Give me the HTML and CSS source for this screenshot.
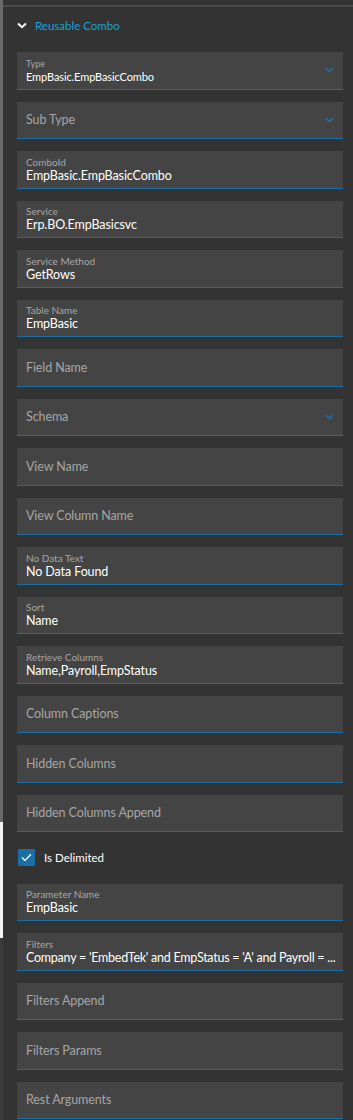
FILE: index.html
```html
<!DOCTYPE html>
<html lang="en">
<head>
    <meta charset="UTF-8">
    <title>Reusable Combo</title>
    <link rel="stylesheet" href="styles.css">
</head>
<body>
<div class="frame">
    <div class="edge">
        <div class="edge-top"></div>
        <div class="edge-white"></div>
        <div class="edge-bottom"></div>
    </div>
    <div class="panel">
        <div class="panel-line"></div>
        <div class="section-head">
            <svg class="head-chevron" width="10" height="7" viewBox="0 0 10 7">
                <path d="M1 1.5 L5 5.2 L9 1.5" fill="none" stroke="#ffffff" stroke-width="2"/>
            </svg>
            <span class="head-title">Reusable Combo</span>
        </div>

        <div class="fields">
            <div class="field field-select">
                <div class="field-text">
                    <div class="field-label">Type</div>
                    <div class="field-value">EmpBasic.EmpBasicCombo</div>
                </div>
                <svg class="select-chevron" width="9" height="6" viewBox="0 0 9 6">
                    <path d="M1 1 L4.5 4.5 L8 1" fill="none" stroke="#1a6fa6" stroke-width="1.6"/>
                </svg>
            </div>
            <div class="field">
                <div class="field-placeholder">Sub Type</div>
                <svg class="select-chevron" width="9" height="6" viewBox="0 0 9 6">
                    <path d="M1 1 L4.5 4.5 L8 1" fill="none" stroke="#1a6fa6" stroke-width="1.6"/>
                </svg>
            </div>
            <div class="field">
                <div class="field-text">
                    <div class="field-label">ComboId</div>
                    <div class="field-value">EmpBasic.EmpBasicCombo</div>
                </div>
            </div>
            <div class="field">
                <div class="field-text">
                    <div class="field-label">Service</div>
                    <div class="field-value">Erp.BO.EmpBasicsvc</div>
                </div>
            </div>
            <div class="field">
                <div class="field-text">
                    <div class="field-label">Service Method</div>
                    <div class="field-value">GetRows</div>
                </div>
            </div>
            <div class="field">
                <div class="field-text">
                    <div class="field-label">Table Name</div>
                    <div class="field-value">EmpBasic</div>
                </div>
            </div>
            <div class="field">
                <div class="field-placeholder">Field Name</div>
            </div>
            <div class="field">
                <div class="field-placeholder">Schema</div>
                <svg class="select-chevron" width="9" height="6" viewBox="0 0 9 6">
                    <path d="M1 1 L4.5 4.5 L8 1" fill="none" stroke="#1a6fa6" stroke-width="1.6"/>
                </svg>
            </div>
            <div class="field">
                <div class="field-placeholder">View Name</div>
            </div>
            <div class="field">
                <div class="field-placeholder">View Column Name</div>
            </div>
            <div class="field">
                <div class="field-text">
                    <div class="field-label">No Data Text</div>
                    <div class="field-value">No Data Found</div>
                </div>
            </div>
            <div class="field">
                <div class="field-text">
                    <div class="field-label">Sort</div>
                    <div class="field-value">Name</div>
                </div>
            </div>
            <div class="field">
                <div class="field-text">
                    <div class="field-label">Retrieve Columns</div>
                    <div class="field-value">Name,Payroll,EmpStatus</div>
                </div>
            </div>
            <div class="field">
                <div class="field-placeholder">Column Captions</div>
            </div>
            <div class="field">
                <div class="field-placeholder">Hidden Columns</div>
            </div>
            <div class="field">
                <div class="field-placeholder">Hidden Columns Append</div>
            </div>

            <div class="check-row">
                <span class="check-box">
                    <svg width="11" height="9" viewBox="0 0 11 9">
                        <path d="M1 4.6 L4 7.4 L10 1.2" fill="none" stroke="#ffffff" stroke-width="1.3"/>
                    </svg>
                </span>
                <span class="check-label">Is Delimited</span>
            </div>

            <div class="field">
                <div class="field-text">
                    <div class="field-label">Parameter Name</div>
                    <div class="field-value">EmpBasic</div>
                </div>
            </div>
            <div class="field field-long">
                <div class="field-text">
                    <div class="field-label">Filters</div>
                    <div class="field-value">Company = 'EmbedTek' and EmpStatus = 'A' and Payroll = ...</div>
                </div>
            </div>
            <div class="field">
                <div class="field-placeholder">Filters Append</div>
            </div>
            <div class="field">
                <div class="field-placeholder">Filters Params</div>
            </div>
            <div class="field">
                <div class="field-placeholder">Rest Arguments</div>
            </div>
        </div>
    </div>
</div>
</body>
</html>
```

FILE: styles.css
```css
body {
    margin: 0;
    background: #333333;
    font-family: 'Lato', 'Noto Sans', sans-serif;
    overflow: hidden;
}

.frame {
    display: flex;
    height: 1120px;
}

.edge {
    width: 3px;
    flex-shrink: 0;
    display: flex;
    flex-direction: column;
}

.edge-top {
    height: 822px;
    background: #6a6a6a;
}

.edge-white {
    height: 116px;
    background: #f4f4f4;
}

.edge-bottom {
    flex: 1;
    background: #3a3a3a;
}

.panel {
    flex: 1;
    min-width: 0;
    padding-top: 5px;
}

.panel-line {
    height: 2px;
    background: #4b4b4b;
}

.section-head {
    height: 36px;
    display: flex;
    align-items: center;
    gap: 8px;
    padding-left: 14px;
}

.head-chevron {
    display: block;
}

.head-title {
    color: #1ea0d8;
    font-size: 11.5px;
}

.fields {
    display: flex;
    flex-direction: column;
    gap: 12px;
    padding: 9px 10px 0 14px;
}

.field {
    height: 37.5px;
    box-sizing: border-box;
    background: #444444;
    border-bottom: 1.5px solid #1a6fa6;
    display: flex;
    align-items: center;
    padding: 0 2px 0 9px;
    flex-shrink: 0;
}

.field-text {
    flex: 1;
    min-width: 0;
    padding-top: 1px;
}

.field-label {
    color: #a6a6a6;
    font-size: 10px;
    line-height: 12px;
}

.field-value {
    color: #ffffff;
    font-size: 12.5px;
    letter-spacing: -0.1px;
    line-height: 16px;
    white-space: nowrap;
}

.field-long {
    padding-right: 0;
}

.field-long .field-value {
    letter-spacing: -0.25px;
}

.field-select .field-label {
    font-size: 9px;
}

.field-select .field-value {
    font-size: 11px;
    line-height: 14px;
}

.field-placeholder {
    flex: 1;
    color: #a6a6a6;
    font-size: 12.5px;
    letter-spacing: -0.1px;
}

.select-chevron {
    display: block;
    margin-right: 7px;
}

.check-row {
    height: 27.5px;
    display: flex;
    align-items: center;
    gap: 9px;
    padding-left: 1px;
}

.check-box {
    width: 17px;
    height: 17px;
    background: #1a6fa6;
    border-radius: 1px;
    display: flex;
    align-items: center;
    justify-content: center;
}

.check-box svg {
    display: block;
}

.check-label {
    color: #ffffff;
    font-size: 11.5px;
}
```
